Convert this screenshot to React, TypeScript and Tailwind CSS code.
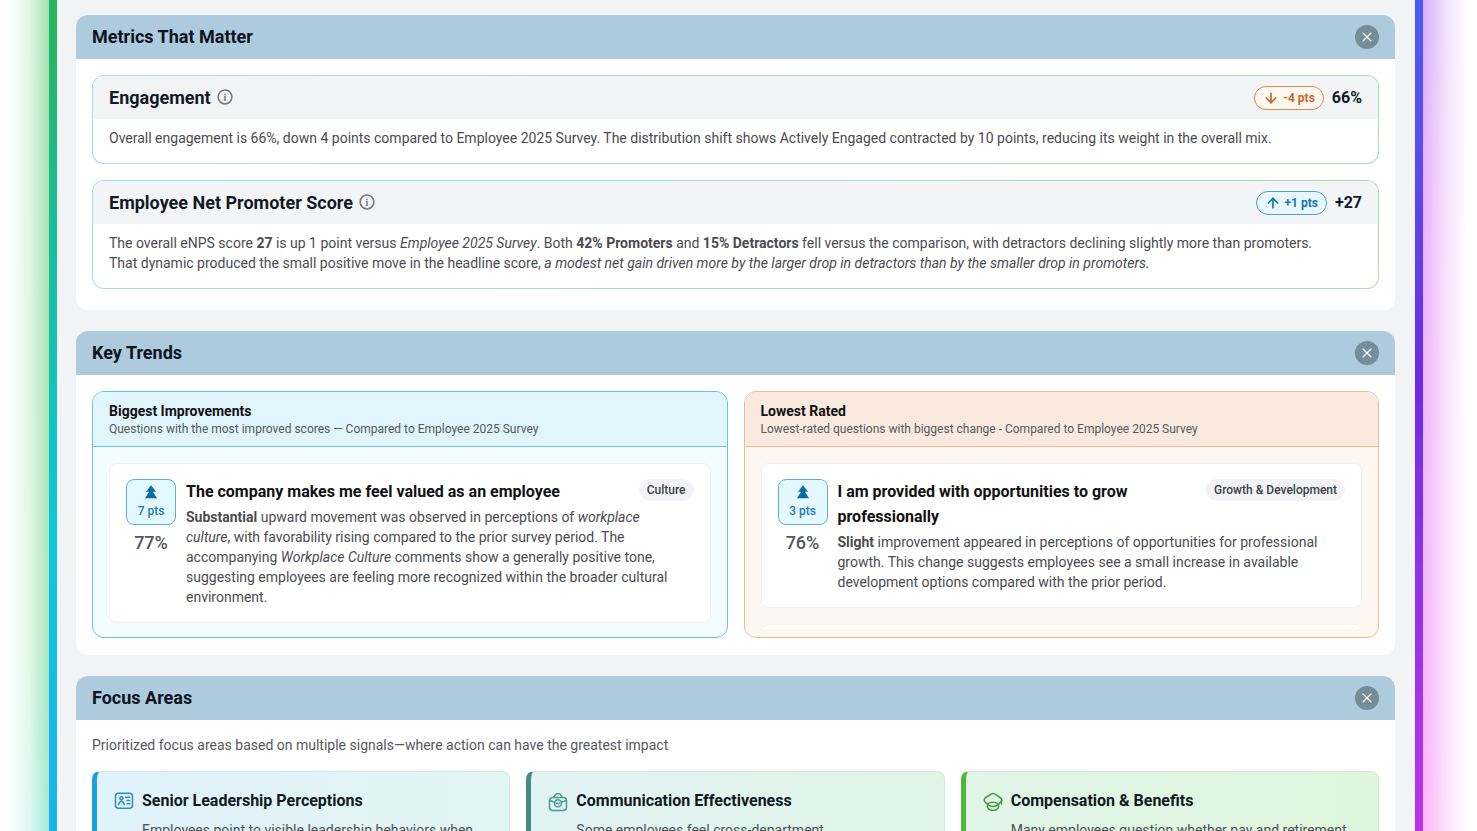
import type { ReactNode } from 'react';
import { ArrowDown, ArrowUp, X } from 'lucide-react';

function InfoIcon() {
  return (
    <svg viewBox="0 0 16 16" className="mb-0.5 size-4 text-[#77777c]" fill="none" stroke="currentColor" strokeWidth="1.5">
      <circle cx="8" cy="8" r="6.900" />
      <path d="M8 4.500v1.500M6.900 7.500H8v3.500M6.700 11.200h2.600" strokeWidth="1.300" />
    </svg>
  );
}

function DoubleUpIcon() {
  return (
    <svg viewBox="0 0 14 14" className="size-3.5 text-[#0b6aa8]" fill="currentColor">
      <path d="M7 0.300l5 6.400H9l4 6.500H1l4-6.500H2z" />
    </svg>
  );
}

function ContactIcon() {
  return (
    <svg viewBox="0 0 20 18" className="h-[18px] w-5 text-[#2f8cc0]" fill="none" stroke="currentColor" strokeWidth="1.5" strokeLinecap="round">
      <rect x="1.500" y="1.200" width="17" height="15" rx="3" />
      <circle cx="7.400" cy="6.300" r="1.600" />
      <path d="M4.500 12.600c.5-2 1.400-3 2.900-3s2.400 1 2.900 3M11.500 5.200h4.200M13 8.500h2.700M13.200 11.800h2.500" />
    </svg>
  );
}

function BriefcaseIcon() {
  return (
    <svg viewBox="0 0 20 20" className="size-5 text-[#4a9c90]" fill="none" stroke="currentColor" strokeWidth="1.5" strokeLinecap="round" strokeLinejoin="round">
      <path d="M5.500 5.500L7.700 2.400c.3-.5.700-.7 1.200-.7h2.200c.5 0 .9.200 1.200.7l2.200 3.100" />
      <rect x="1.500" y="5.500" width="17" height="13" rx="3.200" />
      <path d="M1.800 8.500l4.800 1.800M18.200 8.500l-4.800 1.800" />
      <circle cx="10" cy="11.300" r="3.500" />
      <path d="M8.500 11.600c.5-.9 1-.9 1.500-.3s1 .6 1.500-.3" />
    </svg>
  );
}

function CapIcon() {
  return (
    <svg viewBox="0 0 20 20" className="size-5 text-[#459a45]" fill="none" stroke="currentColor" strokeWidth="1.5" strokeLinecap="round" strokeLinejoin="round">
      <path d="M4.500 12.300L1.900 9.800c-.8-.8-.8-3 .2-3.800L8 2.200c1.300-.8 2.700-.8 4 0L17.900 6c1 .8 1 3 .2 3.800l-2.600 2.500" />
      <path d="M4.500 11.700c3.300-1.700 7.700-1.700 11 0v3.200c-1.600 4.600-9.400 4.600-11 0z" />
      <path d="M4.500 12.600c3.300 2.200 7.700 2.200 11 0M18.500 7.500v4.500" />
    </svg>
  );
}

function Section({ title, children }: { title: string; children: ReactNode }) {
  return (
    <section className="overflow-hidden rounded-xl bg-white">
      <header className="flex h-11 items-center justify-between bg-[#adcbdd] px-4">
        <h2 className="text-lg font-bold text-[#0b1420]">{title}</h2>
        <button type="button" aria-label={`Close ${title}`} className="flex size-6 items-center justify-center rounded-full bg-[#758c99] text-white">
          <X className="size-4" strokeWidth={1.75} />
        </button>
      </header>
      {children}
    </section>
  );
}

type MetricProps = {
  title: string;
  value: string;
  delta: string;
  down?: boolean;
  children: ReactNode;
};

function Metric({ title, value, delta, down, children }: MetricProps) {
  return (
    <article className="rounded-xl bg-linear-to-r from-[#a9d8ec] to-[#a8dba6] p-px">
      <div className="overflow-hidden rounded-[11px] bg-white">
        <header className="flex h-[43px] items-center justify-between bg-[#f2f4f6] px-4">
          <div className="flex items-center gap-1.5">
            <h3 className="text-lg font-bold text-[#121a28]">{title}</h3>
            <InfoIcon />
          </div>
          <div className="flex items-center gap-2">
            <span
              className={
                down
                  ? 'flex h-6 items-center gap-1 rounded-full border border-[#d98a52] bg-[#fff8f0] px-2 text-xs font-bold text-[#c8682a]'
                  : 'flex h-6 items-center gap-1 rounded-full border border-[#4f9fc6] bg-[#e6f7ff] px-2 text-xs font-bold text-[#1976a8]'
              }
            >
              {down ? <ArrowDown className="size-4" strokeWidth={2.5} /> : <ArrowUp className="size-4" strokeWidth={2.5} />}
              {delta}
            </span>
            <span className="text-base font-bold text-[#121a28]">{value}</span>
          </div>
        </header>
        <p className="pt-[9px] pr-10 pb-[15px] pl-4 text-sm text-[#4b4b50]">{children}</p>
      </div>
    </article>
  );
}

type QuestionProps = {
  points: string;
  score: string;
  title: string;
  tag: string;
  children: ReactNode;
};

function Question({ points, score, title, tag, children }: QuestionProps) {
  return (
    <li className="flex shrink-0 gap-2.5 rounded-lg border border-black/5 bg-white px-4 py-[15px]">
      <div className="flex w-[50px] shrink-0 flex-col items-center">
        <div className="flex h-[46px] w-full flex-col items-center justify-center gap-1 rounded-lg border border-[#5fb0cf] bg-[#e4f8ff] text-xs font-medium text-[#2379ad]">
          <DoubleUpIcon />
          {points}
        </div>
        <span className="mt-1 text-lg font-medium text-[#55555c]">{score}</span>
      </div>
      <div className="flex-1">
        <div className="flex items-start justify-between gap-4">
          <h4 className="text-base leading-[25px] font-bold text-[#111]">{title}</h4>
          <span className="flex h-[22px] shrink-0 items-center rounded-full bg-[#f1f3f6] px-2 text-xs font-medium text-[#3c4047]">{tag}</span>
        </div>
        <p className="mt-[3px] pr-2 text-sm text-[#4b4b50]">{children}</p>
      </div>
    </li>
  );
}

const focusAreas = [
  {
    title: 'Senior Leadership Perceptions',
    text: 'Employees point to visible leadership behaviors when',
    icon: <ContactIcon />,
    style: 'border-l-[#1a9fe0] from-[#e0f2fb] to-[#e2f5f3]',
  },
  {
    title: 'Communication Effectiveness',
    text: 'Some employees feel cross-department',
    icon: <BriefcaseIcon />,
    style: 'border-l-[#448c80] from-[#e2f3f4] to-[#e0f5e6]',
  },
  {
    title: 'Compensation & Benefits',
    text: 'Many employees question whether pay and retirement',
    icon: <CapIcon />,
    style: 'border-l-[#4bb83a] from-[#e0f5e8] to-[#dff6dd]',
  },
];

export default function App() {
  return (
    <div className="flex h-screen overflow-hidden bg-white font-[Roboto,sans-serif]">
      <div className="w-[49px] shrink-0 bg-linear-to-b from-[#a3e3ae] via-[#a9e6b8] via-75% to-[#a3ead9] [mask-image:linear-gradient(to_right,transparent_20%,rgba(0,0,0,0.35)_60%,black)]" />
      <div className="w-2 shrink-0 bg-linear-to-b from-[#27b45a] via-[#0fc6e0] via-65% to-[#19b2f0]" />

      <main className="flex min-w-0 flex-1 flex-col gap-[21px] self-start bg-[#f1f3f5] pt-[15px] pr-5 pl-[19px]">
        <Section title="Metrics That Matter">
          <div className="flex flex-col gap-4 px-4 pt-4 pb-[21px]">
            <Metric title="Engagement" value="66%" delta="-4 pts" down>
              Overall engagement is 66%, down 4 points compared to Employee 2025 Survey. The distribution shift shows
              Actively Engaged contracted by 10 points, reducing its weight in the overall mix.
            </Metric>
            <Metric title="Employee Net Promoter Score" value="+27" delta="+1 pts">
              The overall eNPS score <b>27</b> is up 1 point versus <i>Employee 2025 Survey</i>. Both{' '}
              <b>42% Promoters</b> and <b>15% Detractors</b> fell versus the comparison, with detractors declining
              slightly more than promoters. That dynamic produced the small positive move in the headline score,{' '}
              <i>a modest net gain driven more by the larger drop in detractors than by the smaller drop in promoters.</i>
            </Metric>
          </div>
        </Section>

        <Section title="Key Trends">
          <div className="grid grid-cols-2 gap-4 px-4 pt-4 pb-[17px]">
            <div className="overflow-hidden rounded-xl border border-[#6cc3dc] bg-[#f3fcff]">
              <header className="border-b border-[#6cc3dc] bg-[#e1f5fd] px-4 py-[9px]">
                <h3 className="text-sm font-bold text-[#111]">Biggest Improvements</h3>
                <p className="text-xs text-[#55585c]">
                  Questions with the most improved scores — Compared to Employee 2025 Survey
                </p>
              </header>
              <ul className="mx-4 mt-4 mb-2 flex h-[166px] flex-col gap-4 overflow-hidden">
                <Question points="7 pts" score="77%" title="The company makes me feel valued as an employee" tag="Culture">
                  <b>Substantial</b> upward movement was observed in perceptions of <i>workplace culture</i>, with
                  favorability rising compared to the prior survey period. The accompanying <i>Workplace Culture</i>{' '}
                  comments show a generally positive tone, suggesting employees are feeling more recognized within the
                  broader cultural environment.
                </Question>
              </ul>
            </div>
            <div className="overflow-hidden rounded-xl border border-[#edbc8e] bg-[#fef6f0]">
              <header className="border-b border-[#edbc8e] bg-[#f9e9de] px-4 py-[9px]">
                <h3 className="text-sm font-bold text-[#111]">Lowest Rated</h3>
                <p className="text-xs text-[#55585c]">
                  Lowest-rated questions with biggest change - Compared to Employee 2025 Survey
                </p>
              </header>
              <ul className="mx-4 mt-4 mb-2 flex h-[166px] flex-col gap-4 overflow-hidden">
                <Question
                  points="3 pts"
                  score="76%"
                  title="I am provided with opportunities to grow professionally"
                  tag="Growth & Development"
                >
                  <b>Slight</b> improvement appeared in perceptions of opportunities for professional growth. This
                  change suggests employees see a small increase in available development options compared with the
                  prior period.
                </Question>
                <li className="h-11 shrink-0 rounded-lg border border-black/5 bg-white" />
              </ul>
            </div>
          </div>
        </Section>

        <Section title="Focus Areas">
          <div className="px-4 pt-[15px] pb-5">
            <p className="text-sm text-[#55585c]">
              Prioritized focus areas based on multiple signals—where action can have the greatest impact
            </p>
            <div className="mt-4 grid grid-cols-3 gap-4">
              {focusAreas.map((area) => (
                <article
                  key={area.title}
                  className={`flex gap-2 rounded-lg border border-l-[5px] border-black/5 bg-linear-to-r p-[17px] ${area.style}`}
                >
                  <span className="mt-[3px] shrink-0">{area.icon}</span>
                  <div>
                    <h3 className="text-base font-bold text-[#101a1e]">{area.title}</h3>
                    <p className="mt-[7px] text-sm text-[#4b5355]">{area.text}</p>
                  </div>
                </article>
              ))}
            </div>
          </div>
        </Section>
      </main>

      <div className="w-2 shrink-0 bg-linear-to-b from-[#4a5cf0] via-[#6a2ae6] via-45% to-[#bb33e8]" />
      <div className="w-[54px] shrink-0 bg-linear-to-b from-[#d9b0f8] via-[#efb2fb] via-35% to-[#f9b4fa] [mask-image:linear-gradient(to_left,transparent_15%,rgba(0,0,0,0.35)_55%,black)]" />
    </div>
  );
}
